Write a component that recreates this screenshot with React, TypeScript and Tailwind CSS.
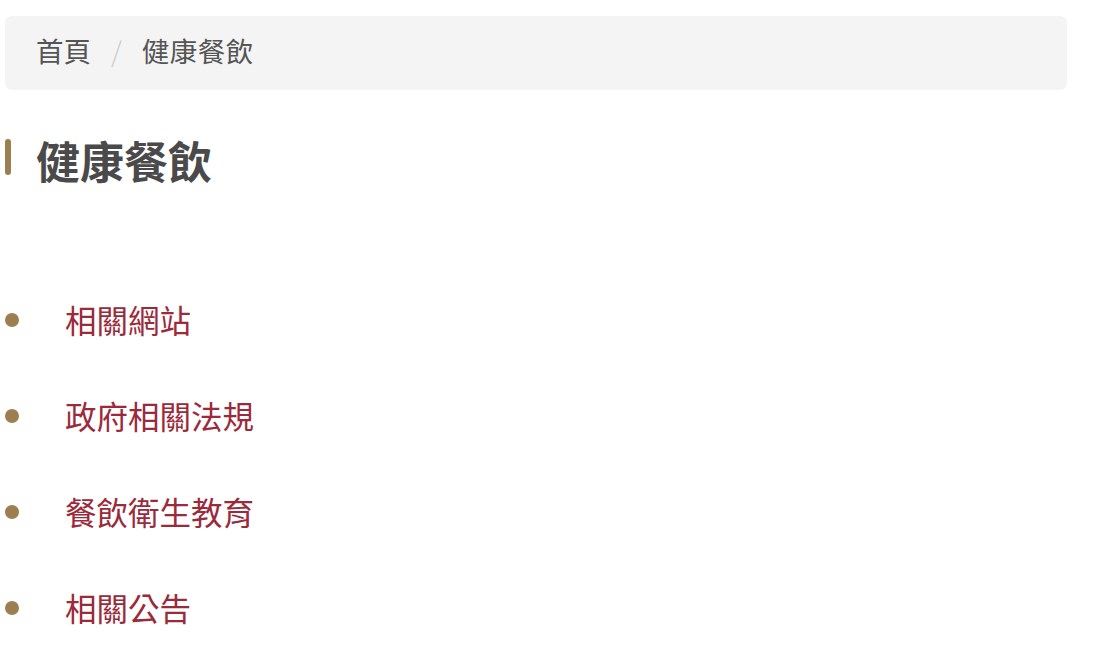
import React from "react";

const items = ["相關網站", "政府相關法規", "餐飲衛生教育", "相關公告"];

export default function App() {
  return (
    <div
      className="w-[1110px] h-[648px] bg-white overflow-hidden"
      style={{ fontFamily: '"Noto Sans CJK TC", "Noto Sans", sans-serif' }}
    >
      <div className="pt-[16px] pl-[5px] w-[1067px]">
        <div className="h-[74px] rounded-[7px] bg-[#f4f4f4] flex items-center pl-[31px] pb-[4px] text-[27.5px] text-[#555555]">
          <span>首頁</span>
          <span className="mx-[20px] text-[#cccccc] font-light">/</span>
          <span className="tracking-[0.5px]">健康餐飲</span>
        </div>
        <div className="mt-[48px] flex items-center">
          <div className="w-[6px] h-[36px] rounded-full bg-[#9c7f50] mb-[6px]" />
          <h1 className="ml-[25px] text-[44px] font-bold text-[#4a4a4a] leading-none">健康餐飲</h1>
        </div>
        <ul className="mt-[116px] flex flex-col gap-[52px]">
          {items.map((t) => (
            <li key={t} className="flex items-center h-[44px]">
              <span className="w-[14px] h-[14px] rounded-full bg-[#9c7f50]" />
              <a className="ml-[46px] text-[31.5px] text-[#9b2a3b] leading-none">{t}</a>
            </li>
          ))}
        </ul>
      </div>
    </div>
  );
}
